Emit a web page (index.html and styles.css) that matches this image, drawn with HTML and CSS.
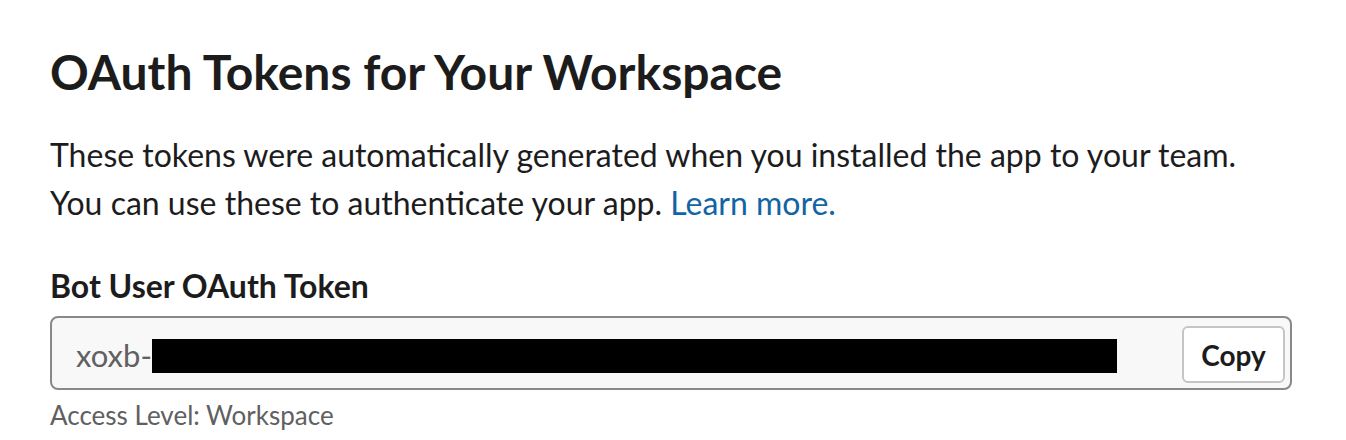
FILE: index.html
```html
<!DOCTYPE html>
<html>
<head>
<meta charset="utf-8">
<link rel="stylesheet" href="styles.css">
</head>
<body>
<main class="section">
  <h2 class="title">OAuth Tokens for Your Workspace</h2>
  <p class="desc">These tokens were automatically generated when you installed the app to your team.<br>You can use these to authenticate your app. <a class="link" href="#">Learn more.</a></p>
  <h3 class="label">Bot User OAuth Token</h3>
  <div class="token-field">
    <div class="token-value"><span class="prefix">xoxb-</span><span class="redact"></span></div>
    <button class="copy-btn">Copy</button>
  </div>
  <div class="hint">Access Level: Workspace</div>
</main>
</body>
</html>
```
FILE: styles.css
```css
html, body {
  margin: 0;
  padding: 0;
  background: #ffffff;
}
body {
  font-family: Lato, "Noto Sans", sans-serif;
  color: #1d1c1d;
}
.section {
  padding: 42px 54px 0 50px;
  width: 1242px;
}
.title {
  margin: 0;
  font-size: 48px;
  font-weight: 700;
  line-height: 60px;
  color: #1d1c1d;
}
.desc {
  margin: 29px 0 0;
  font-size: 32px;
  line-height: 48px;
}
.link {
  color: #1264a3;
  text-decoration: none;
}
.label {
  margin: 39px 0 0;
  font-size: 32px;
  font-weight: 700;
  line-height: 40px;
}
.token-field {
  margin-top: 10px;
  display: flex;
  align-items: center;
  height: 74px;
  box-sizing: border-box;
  border: 2px solid #8a898a;
  border-radius: 8px;
  background: #f8f8f8;
  padding: 3px 5px 0 24px;
}
.token-value {
  flex: 1;
  display: flex;
  align-items: center;
  font-size: 31px;
  color: #616061;
}
.redact {
  display: inline-block;
  width: 965px;
  height: 34px;
  background: #000;
  margin-top: 2px;
}
.copy-btn {
  font-family: Lato, "Noto Sans", sans-serif;
  font-weight: 700;
  font-size: 28px;
  color: #1d1c1d;
  background: #ffffff;
  border: 2px solid #c5c5c5;
  border-radius: 6px;
  width: 103px;
  height: 57px;
  padding: 0;
}
.hint {
  margin-top: 9px;
  font-size: 26px;
  line-height: 32px;
  color: #616061;
}
```
